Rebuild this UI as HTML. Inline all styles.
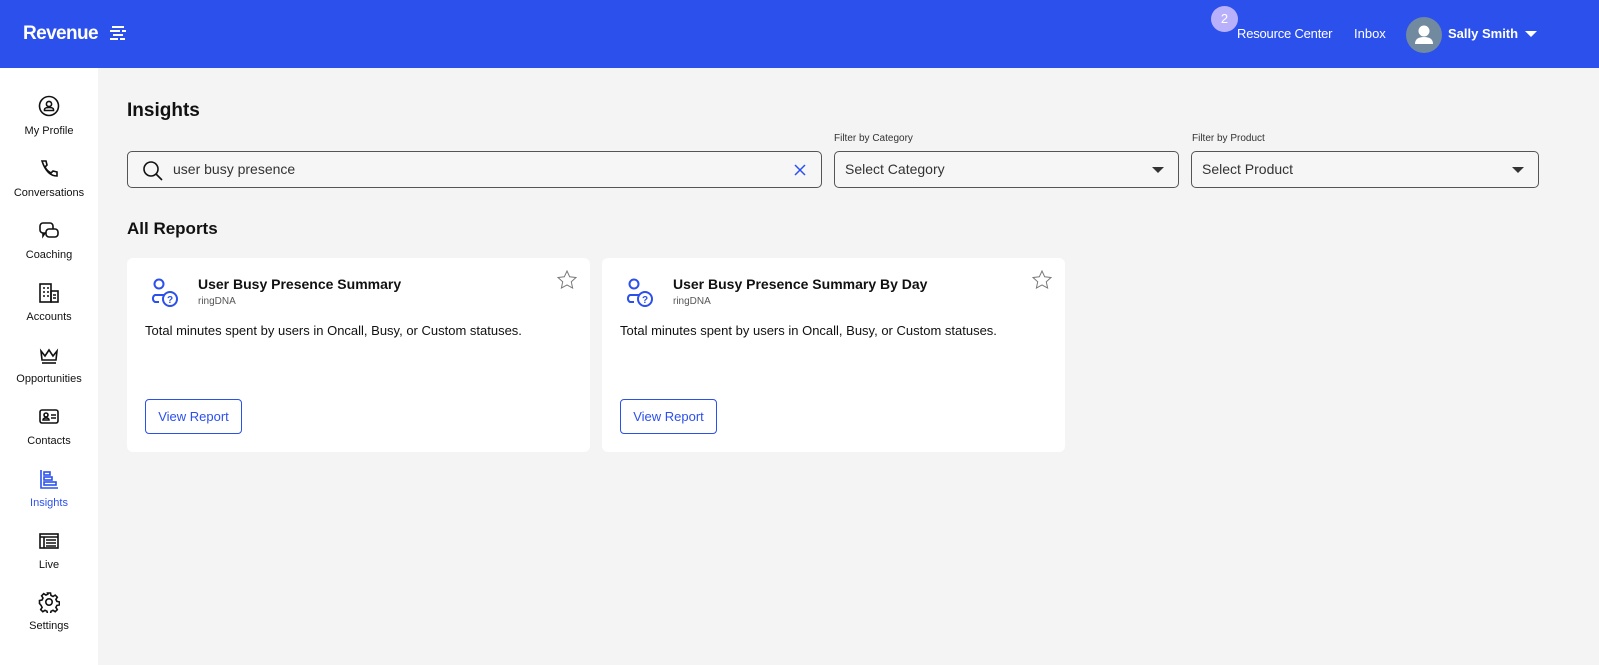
<!DOCTYPE html><html><head><style>
*{box-sizing:border-box;margin:0;padding:0}
body{width:1599px;height:665px;overflow:hidden;background:#f4f4f4;font-family:"Liberation Sans",sans-serif;color:#111;position:relative}
.hdr{position:absolute;left:0;top:0;width:1599px;height:68px;background:#2c50ec;color:#fff}
.side{position:absolute;left:0;top:68px;width:98px;height:597px;background:#fff}
.ni{position:absolute;left:0;width:98px;text-align:center;font-size:11px}
.ni svg{display:block;margin:0 auto}
.abs{position:absolute}
.box{position:absolute;border:1px solid #555;border-radius:5px;background:#f6f6f6;height:37px;top:151px;font-size:14px;color:#333;padding-left:10px;line-height:35px}
.tri{position:absolute;right:14px;top:15px;width:0;height:0;border-left:6px solid transparent;border-right:6px solid transparent;border-top:6px solid #333}
.card{position:absolute;top:258px;width:463px;height:194px;background:#fff;border-radius:6px}
.btn{position:absolute;left:18px;top:141px;width:97px;height:35px;border:1px solid #2c50ec;border-radius:4px;color:#2c50ec;font-size:13px;text-align:center;line-height:33px}
</style></head><body>
<div class="hdr">
<div class="abs" style="left:23px;top:23px;font-size:19px;font-weight:bold;letter-spacing:-0.6px">Revenue</div>
<svg class="abs" style="left:110px;top:26px" width="18" height="16"><g fill="#fff"><rect x="2" y="0" width="12" height="2"/><rect x="0" y="4" width="10" height="2"/><rect x="12" y="4" width="4" height="2"/><rect x="3" y="8" width="10" height="2"/><rect x="0" y="12" width="8" height="2"/><rect x="10" y="12" width="5" height="2"/></g></svg>
<div class="abs" style="left:1211px;top:6px;width:27px;height:26px;border-radius:50%;background:#b9b0fb;color:#fff;font-size:13px;text-align:center;line-height:26px">2</div>
<div class="abs" style="left:1237px;top:26px;font-size:13px;letter-spacing:-0.2px">Resource Center</div>
<div class="abs" style="left:1354px;top:26px;font-size:13px">Inbox</div>
<div class="abs" style="left:1406px;top:17px;width:36px;height:36px;border-radius:50%;background:#718a9f"><svg width="36" height="36"><circle cx="18" cy="14" r="5.5" fill="#fff"/><path d="M9 27q0-7 9-7t9 7z" fill="#fff"/></svg></div>
<div class="abs" style="left:1448px;top:26px;font-size:13px;font-weight:bold">Sally Smith</div>
<div class="abs" style="left:1525px;top:31px;border-left:6px solid transparent;border-right:6px solid transparent;border-top:6px solid #fff"></div>
</div>
<div class="side">
<div class="ni" style="top:27px"><svg width="22" height="22" fill="none" stroke="#111" stroke-width="1.6"><circle cx="11" cy="11" r="9.5"/><circle cx="11" cy="9" r="2.6"/><path d="M6.5 15.5h9v-1q0-2-4.5-2t-4.5 2z"/></svg><div style="margin-top:8px">My Profile</div></div>
<div class="ni" style="top:90px"><svg width="22" height="22" fill="none" stroke="#111" stroke-width="1.6"><path d="M4 3l4 0 1 4-2 2q2 4 6 6l2-2 4 1v4q-10 0-15-15z"/></svg><div style="margin-top:7px">Conversations</div></div>
<div class="ni" style="top:152px"><svg width="22" height="22" fill="none" stroke="#111" stroke-width="1.6"><rect x="2" y="3" width="13" height="10" rx="3"/><rect x="8" y="9" width="12" height="8" rx="3" fill="#fff"/><path d="M5 13v3l2-3"/></svg><div style="margin-top:7px">Coaching</div></div>
<div class="ni" style="top:214px"><svg width="22" height="22" fill="none" stroke="#111" stroke-width="1.6"><rect x="2" y="2" width="11" height="18"/><rect x="13" y="9" width="7" height="11"/><path d="M5 6h2M9 6h2M5 10h2M9 10h2M5 14h2M9 14h2M15 13h3M15 16h3"/></svg><div style="margin-top:7px">Accounts</div></div>
<div class="ni" style="top:276px"><svg width="22" height="22" fill="none" stroke="#111" stroke-width="1.6"><path d="M3 7l4 5 4-6 4 6 4-5-1 9H4z"/><path d="M4 19h14"/></svg><div style="margin-top:7px">Opportunities</div></div>
<div class="ni" style="top:338px"><svg width="22" height="22" fill="none" stroke="#111" stroke-width="1.6"><rect x="2" y="4" width="18" height="13" rx="2"/><circle cx="8" cy="9" r="2"/><path d="M5 14q0-2 3-2t3 2zM13 9h5M13 12h5"/></svg><div style="margin-top:7px">Contacts</div></div>
<div class="ni" style="top:400px;color:#2c50ec"><svg width="22" height="22" fill="none" stroke="#2c50ec" stroke-width="1.6"><path d="M3 2v18h17"/><rect x="6" y="4" width="6" height="3"/><rect x="6" y="9" width="8" height="3"/><rect x="6" y="14" width="12" height="3"/></svg><div style="margin-top:7px">Insights</div></div>
<div class="ni" style="top:462px"><svg width="22" height="22" fill="none" stroke="#111" stroke-width="1.6"><rect x="2" y="4" width="18" height="14"/><path d="M2 7h18M6 7v11M8 10h10M8 13h10M8 16h10"/></svg><div style="margin-top:7px">Live</div></div>
<div class="ni" style="top:523px"><svg width="22" height="22" fill="none" stroke="#111" stroke-width="1.6"><circle cx="11" cy="11" r="3.2"/><path d="M9.5 2h3l.5 2.5 2 1 2.2-1.4 2.1 2.1-1.4 2.2 1 2 2.5.5v3l-2.5.5-1 2 1.4 2.2-2.1 2.1-2.2-1.4-2 1-.5 2.5h-3l-.5-2.5-2-1-2.2 1.4-2.1-2.1 1.4-2.2-1-2L1.5 12.5v-3L4 9l1-2L3.6 4.8l2.1-2.1L7.9 4.1l2-1z"/></svg><div style="margin-top:7px">Settings</div></div>
</div>
<div class="abs" style="left:127px;top:100px;font-size:19px;font-weight:bold">Insights</div>
<div class="box" style="left:127px;width:695px;padding-left:45px">user busy presence
<svg class="abs" style="left:14px;top:8px" width="22" height="22" fill="none" stroke="#111" stroke-width="1.6"><circle cx="9" cy="9" r="7"/><path d="M14 14l6 6"/></svg>
<svg class="abs" style="right:15px;top:12px" width="12" height="12" stroke="#2c50ec" stroke-width="1.5"><path d="M1 1l10 10M11 1L1 11"/></svg></div>
<div class="abs" style="left:834px;top:133px;font-size:10px;color:#333">Filter by Category</div>
<div class="box" style="left:834px;width:345px">Select Category<div class="tri"></div></div>
<div class="abs" style="left:1192px;top:133px;font-size:10px;color:#333">Filter by Product</div>
<div class="box" style="left:1191px;width:348px">Select Product<div class="tri"></div></div>
<div class="abs" style="left:127px;top:219px;font-size:17px;font-weight:bold">All Reports</div>
<div class="card" style="left:127px">
<svg class="abs" style="left:20px;top:20px" width="32" height="30" fill="none" stroke="#2c50ec" stroke-width="2"><circle cx="12" cy="6" r="4.5"/><path d="M17 17h-9a4 4 0 0 0 0 7h4"/><circle cx="23" cy="21" r="7"/><text x="23" y="25" font-size="10" font-weight="bold" fill="#2c50ec" stroke="none" text-anchor="middle" font-family="Liberation Sans">?</text></svg>
<div class="abs" style="left:71px;top:18px;font-size:14px;font-weight:bold">User Busy Presence Summary</div>
<div class="abs" style="left:71px;top:38px;font-size:10px;color:#555">ringDNA</div>
<svg class="abs" style="right:13px;top:12px" width="20" height="20" fill="none" stroke="#777" stroke-width="1"><path d="M10 1l2.7 5.8 6.3.7-4.7 4.3 1.3 6.2L10 14.9 4.4 18l1.3-6.2L1 7.5l6.3-.7z"/></svg>
<div class="abs" style="left:18px;top:65px;font-size:13px">Total minutes spent by users in Oncall, Busy, or Custom statuses.</div>
<div class="btn">View Report</div></div>
<div class="card" style="left:602px">
<svg class="abs" style="left:20px;top:20px" width="32" height="30" fill="none" stroke="#2c50ec" stroke-width="2"><circle cx="12" cy="6" r="4.5"/><path d="M17 17h-9a4 4 0 0 0 0 7h4"/><circle cx="23" cy="21" r="7"/><text x="23" y="25" font-size="10" font-weight="bold" fill="#2c50ec" stroke="none" text-anchor="middle" font-family="Liberation Sans">?</text></svg>
<div class="abs" style="left:71px;top:18px;font-size:14px;font-weight:bold">User Busy Presence Summary By Day</div>
<div class="abs" style="left:71px;top:38px;font-size:10px;color:#555">ringDNA</div>
<svg class="abs" style="right:13px;top:12px" width="20" height="20" fill="none" stroke="#777" stroke-width="1"><path d="M10 1l2.7 5.8 6.3.7-4.7 4.3 1.3 6.2L10 14.9 4.4 18l1.3-6.2L1 7.5l6.3-.7z"/></svg>
<div class="abs" style="left:18px;top:65px;font-size:13px">Total minutes spent by users in Oncall, Busy, or Custom statuses.</div>
<div class="btn">View Report</div></div>
</body></html>
